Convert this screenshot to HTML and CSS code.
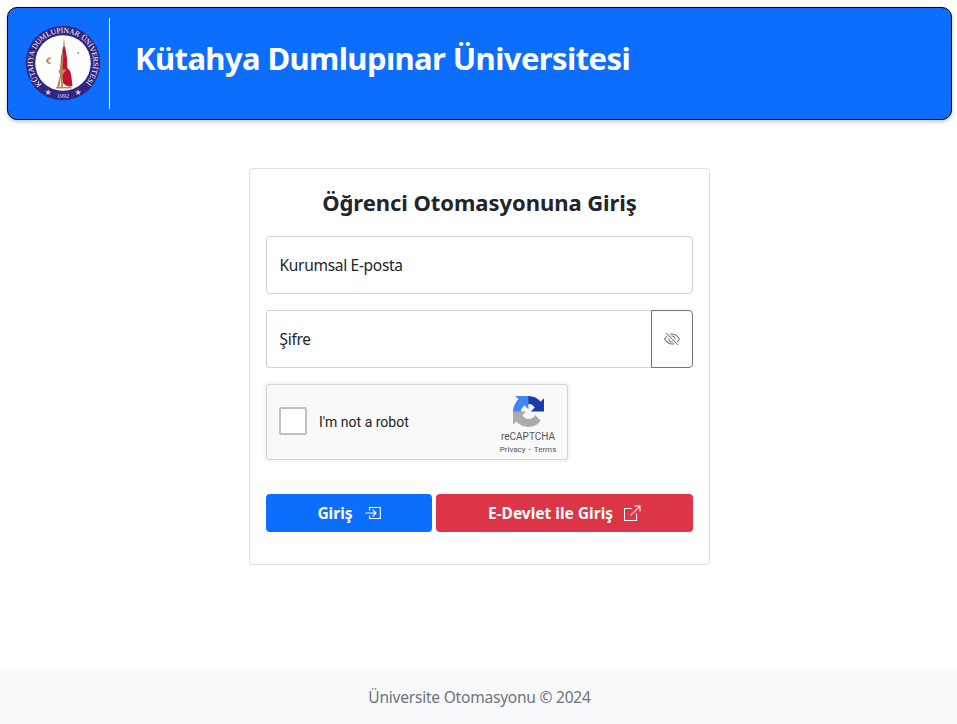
FILE: index.html
```html
<!DOCTYPE html>
<html lang="tr">
<head>
<meta charset="utf-8">
<title>Öğrenci Otomasyonu</title>
<link rel="stylesheet" href="styles.css">
</head>
<body>
<header class="banner">
  <div class="brand">
    <svg class="seal" viewBox="0 0 76 76">
      <defs>
        <path id="ring" d="M16.800 59.500A30.200 30.200 0 1 1 59.200 59.500"/>
      </defs>
      <circle cx="38" cy="38" r="37.300" fill="#312783"/>
      <circle cx="38" cy="38" r="27.800" fill="#fff"/>
      <text class="seal-text"><textPath href="#ring" textLength="140" startOffset="0">KÜTAHYA DUMLUPINAR ÜNİVERSİTESİ</textPath></text>
      <text class="seal-year" x="38" y="72.800" text-anchor="middle">1992</text>
      <text class="seal-star" x="23" y="70" text-anchor="middle">★</text>
      <text class="seal-star" x="53" y="70" text-anchor="middle">★</text>
      <path d="M39 12L40.200 25H37.800Z" fill="#b88a57"/>
      <path d="M38 22H40.200L42 33L42.300 43Q45.500 45 46.300 51L47.500 61Q42 62.500 38 58L35.200 45L36 33Z" fill="#c5112e"/>
      <path d="M38 22L36.500 34L35.800 43L33.500 46L35 50L32 62H34.500L36 52V62H38L37.500 50L41.500 44.500L37.500 44.500L38.200 32Z" fill="#b88a57"/>
      <path d="M31 62.700H46.500" stroke="#b88a57" stroke-width="1.500"/>
      <path d="M26.500 33.600A3 3 0 1 0 26.500 37.900A2.300 2.300 0 1 1 26.500 33.600Z" fill="#b88a57" stroke="#b88a57" stroke-width=".3"/>
      <circle cx="53.300" cy="28" r="1" fill="#c5806b"/>
    </svg>
  </div>
  <h1 class="banner-title">Kütahya Dumlupınar Üniversitesi</h1>
</header>

<main class="card">
  <h2 class="card-title">Öğrenci Otomasyonuna Giriş</h2>
  <div class="field">Kurumsal E-posta</div>
  <div class="group">
    <div class="field field-joined">Şifre</div>
    <button class="toggle" type="button" aria-label="Şifre">
      <svg width="16" height="16" viewBox="0 0 16 16" fill="#6c757d"><path d="M13.359 11.238C15.060 9.720 16 8 16 8s-3-5.500-8-5.500a7.028 7.028 0 0 0-2.790.588l.770.771A5.944 5.944 0 0 1 8 3.500c2.120 0 3.879 1.168 5.168 2.457A13.134 13.134 0 0 1 14.828 8c-.058.087-.122.183-.195.288-.335.480-.830 1.120-1.465 1.755-.165.165-.337.328-.517.486l.708.709z"/><path d="M11.297 9.176a3.500 3.500 0 0 0-4.474-4.474l.823.823a2.500 2.500 0 0 1 2.829 2.829l.822.822zm-2.943 1.299.822.822a3.500 3.500 0 0 1-4.474-4.474l.823.823a2.500 2.500 0 0 0 2.829 2.829z"/><path d="M3.350 5.470c-.180.160-.353.322-.518.487A13.134 13.134 0 0 0 1.172 8l.195.288c.335.480.830 1.120 1.465 1.755C4.121 11.332 5.881 12.500 8 12.500c.716 0 1.390-.133 2.020-.360l.770.772A7.029 7.029 0 0 1 8 13.500C3 13.500 0 8 0 8s.939-1.721 2.641-3.238l.708.709zm10.296 8.884-12-12 .708-.708 12 12-.708.708z"/></svg>
    </button>
  </div>

  <div class="captcha">
    <div class="check"></div>
    <div class="captcha-label">I'm not a robot</div>
    <div class="captcha-brand">
      <svg width="31" height="31" viewBox="0 0 64 64"><path fill="#1c3aa9" d="M64 31.955l-.033-1.370V4.687l-7.160 7.160C50.948 4.674 42.033.093 32.050.093c-10.400 0-19.622 4.960-25.458 12.640l11.736 11.860a15.550 15.550 0 0 1 4.754-5.334c2.050-1.600 4.952-2.906 8.968-2.906.485 0 .860.057 1.135.163 4.976.393 9.288 3.140 11.828 7.124l-8.307 8.307L64 31.953"/><path fill="#4285f4" d="M31.862.094l-1.370.033H4.594l7.160 7.160C4.580 13.147 0 22.060 0 32.046c0 10.400 4.960 19.622 12.640 25.458L24.500 45.768a15.550 15.550 0 0 1-5.334-4.754c-1.600-2.050-2.906-4.952-2.906-8.968 0-.485.057-.860.163-1.135.393-4.976 3.140-9.288 7.124-11.828l8.307 8.307L31.860.095"/><path fill="#ababab" d="M.001 32.045l.033 1.370v25.898l7.160-7.160c5.860 7.173 14.774 11.754 24.760 11.754 10.400 0 19.622-4.960 25.458-12.640l-11.736-11.860a15.550 15.550 0 0 1-4.754 5.334c-2.050 1.600-4.952 2.906-8.968 2.906-.485 0-.860-.057-1.135-.163-4.976-.393-9.288-3.140-11.828-7.124l8.307-8.307c-10.522.040-22.400.066-27.295-.005"/></svg>
      <div class="captcha-name">reCAPTCHA</div>
      <div class="captcha-links">Privacy<i>-</i>Terms</div>
    </div>
  </div>

  <div class="actions">
    <button class="btn btn-primary" type="button"><span>Giriş</span>
      <svg class="icon-in" width="16" height="14" viewBox="0 0 16 14" fill="none" stroke="#fff"><path d="M4.500 4.500V1.500H15.300V12.500H4.500V9.500" stroke-width="1.100"/><path d="M.5 7H11M7.500 3.500L11 7L7.500 10.500" stroke-width="1.200"/></svg>
    </button>
    <button class="btn btn-danger" type="button"><span>E-Devlet ile Giriş</span>
      <svg class="icon-out" width="18" height="17" viewBox="0 0 18 17" fill="none" stroke="#fff"><path d="M9 3.500H1.500V15.500H13.500V8.500M11.500 1H17V6.500M17 1L7.500 10.500" stroke-width="1.050"/></svg>
    </button>
  </div>
</main>

<footer class="footer">Üniversite Otomasyonu © 2024</footer>
</body>
</html>
```
FILE: styles.css
```css
* { box-sizing: border-box; }
body {
  margin: 0;
  height: 724px;
  display: flex;
  flex-direction: column;
  align-items: center;
  overflow: hidden;
  background: #fff;
  color: #212529;
  font-family: "Noto Sans", "Open Sans", sans-serif;
  font-size: 15.5px;
}
h1, h2 { margin: 0; font-weight: 700; }
.banner {
  align-self: stretch;
  height: 113px;
  flex: none;
  margin: 7px 5px 0 7px;
  padding: 10px 17px;
  display: flex;
  background: #0d6efd;
  border: 1px solid #000;
  border-radius: 10px;
  box-shadow: 0 2px 4px rgba(0, 0, 0, .2);
}
.brand {
  width: 85px;
  border-right: 1px solid #fff;
  padding-top: 7px;
}
.seal { display: block; width: 76px; height: 76px; }
.seal-text { font: 7.6px "Liberation Serif", serif; fill: #fff; }
.seal-year { font: 6px "Liberation Serif", serif; fill: #d8d4ec; }
.seal-star { font: 8px "DejaVu Sans", sans-serif; fill: #d8d4ec; }
.banner-title {
  margin-left: 25px;
  color: #fff;
  font-size: 31px;
  letter-spacing: -.6px;
  line-height: 44px;
  padding-top: 18px;
  white-space: nowrap;
}
.card {
  width: 461px;
  height: 397px;
  flex: none;
  margin-top: 48px;
  margin-left: 2px;
  padding: 16px;
  border: 1px solid #dfdfdf;
  border-radius: 4px;
}
.card-title {
  font-size: 22px;
  letter-spacing: -.06px;
  line-height: 34px;
  height: 51px;
  text-align: center;
  white-space: nowrap;
}
.field {
  height: 58px;
  padding: 0 12.5px;
  display: flex;
  align-items: center;
  border: 1px solid #ced4da;
  border-radius: 4px;
  letter-spacing: -.3px;
}
.group { display: flex; margin-top: 16px; }
.field-joined { flex: 1; border-right: 0; border-radius: 4px 0 0 4px; }
.toggle {
  width: 42px;
  padding: 0;
  display: flex;
  align-items: center;
  justify-content: center;
  background: #fff;
  border: 1px solid #6c757d;
  border-radius: 0 4px 4px 0;
}
.captcha {
  width: 302px;
  height: 76px;
  margin-top: 16px;
  padding-left: 12px;
  display: flex;
  align-items: center;
  background: #f9f9f9;
  border: 1px solid #d3d3d3;
  border-radius: 3px;
  box-shadow: 0 0 4px 1px rgba(0, 0, 0, .08);
  font-family: Roboto, sans-serif;
}
.check {
  width: 28px;
  height: 28px;
  margin-top: -2px;
  background: #fff;
  border: 2px solid #c1c1c1;
  border-radius: 2px;
}
.captcha-label { margin-left: 12px; font-size: 14px; color: #222; }
.captcha-brand {
  width: 78px;
  margin-left: auto;
  align-self: stretch;
  padding-top: 11px;
  text-align: center;
  color: #555;
}
.captcha-brand svg { display: block; margin: 0 auto; }
.captcha-name { font-size: 10px; line-height: 12px; margin-top: 4px; }
.captcha-links { font-size: 8px; line-height: 10px; margin-top: 2px; }
.captcha-links i { font-style: normal; margin: 0 3px; }
.actions { display: flex; gap: 4px; margin-top: 34px; }
.btn {
  height: 38px;
  padding: 0;
  display: flex;
  align-items: center;
  justify-content: center;
  border: 0;
  border-radius: 4px;
  color: #fff;
  font: 700 15.5px "Noto Sans", sans-serif;
}
.btn-primary { width: 166px; background: #0d6efd; }
.btn-danger { width: 257px; background: #dc3545; }
.icon-in { margin-left: 12px; }
.icon-out { margin-left: 10px; }
.footer {
  align-self: stretch;
  margin-top: auto;
  height: 55px;
  padding: 1px 0 0 2px;
  display: flex;
  align-items: center;
  justify-content: center;
  background: #f8f9fa;
  color: #6c757d;
  letter-spacing: -.21px;
}
```
